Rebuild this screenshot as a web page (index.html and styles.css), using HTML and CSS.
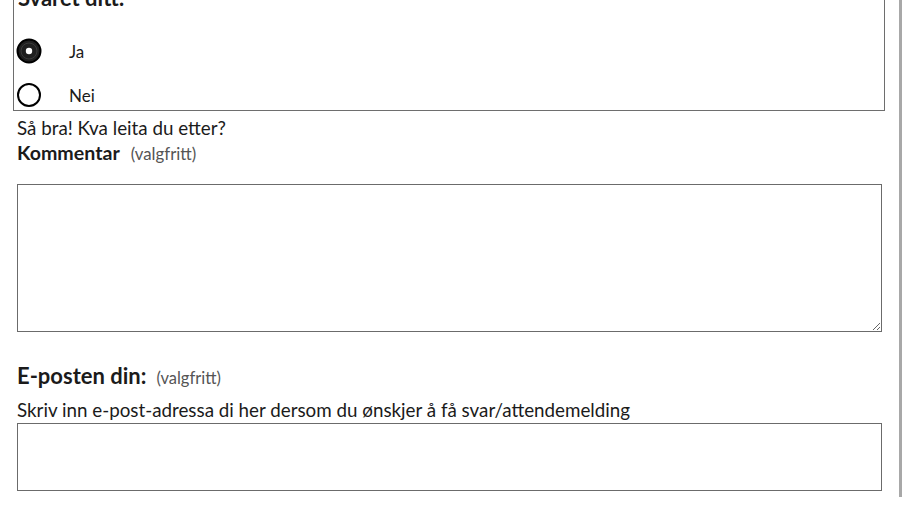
FILE: index.html
```html
<!DOCTYPE html>
<html lang="nn">
<head>
<meta charset="utf-8">
<title>Tilbakemelding</title>
<link rel="stylesheet" href="styles.css">
</head>
<body>
<div class="page">
  <div class="main">
    <div class="fieldset">
      <h2 class="legend">Svaret ditt:</h2>
      <label class="radio-row">
        <svg class="radio" width="26" height="26" viewBox="0 0 26 26"><circle cx="13" cy="13" r="11.5" fill="#1f1f1f" stroke="#000" stroke-width="2"/><circle cx="13" cy="13" r="8" fill="none" stroke="#3a3a3a" stroke-width="1"/><circle cx="13" cy="13" r="3.2" fill="#fff"/></svg>
        <span class="radio-text">Ja</span>
      </label>
      <label class="radio-row">
        <svg class="radio" width="26" height="26" viewBox="0 0 26 26"><circle cx="13" cy="13" r="11" fill="#fff" stroke="#000" stroke-width="2"/></svg>
        <span class="radio-text">Nei</span>
      </label>
    </div>
    <p class="lead">Så bra! Kva leita du etter?</p>
    <p class="label"><strong>Kommentar</strong><span class="optional">(valgfritt)</span></p>
    <textarea class="comment"></textarea>
    <h3 class="email-title">E-posten din:<span class="optional">(valgfritt)</span></h3>
    <p class="hint">Skriv inn e-post-adressa di her dersom du ønskjer å få svar/attendemelding</p>
    <div class="email-input"></div>
  </div>
  <div class="edge"></div>
</div>
</body>
</html>
```
FILE: styles.css
```css
html, body {
  margin: 0;
  padding: 0;
  background: #fff;
  overflow: hidden;
}
body {
  font-family: Lato, "Open Sans", sans-serif;
  color: #1b1b1b;
  font-size: 18.8px;
}
.page {
  display: flex;
  width: 902px;
  height: 507px;
  align-items: flex-start;
}
.main {
  width: 898px;
  margin-top: -30px;
}
.edge {
  width: 3px;
  height: 497px;
  margin-left: 1px;
  background: #a8a8a8;
}
.fieldset {
  margin-left: 13px;
  width: 868px;
  border: 1px solid #6e6e6e;
  padding: 15px 0 2px 2px;
}
.legend {
  margin: 0 0 28px 2px;
  font-size: 22px;
  line-height: 24px;
  font-weight: 700;
  color: #1b1b1b;
}
.radio-row {
  display: flex;
  align-items: center;
  height: 26px;
  margin-top: 18px;
}
.legend + .radio-row {
  margin-top: 0;
}
.radio {
  display: block;
  flex: none;
}
.radio-text {
  margin-left: 27px;
  font-size: 17px;
}
.lead {
  margin: 6px 0 0 17px;
  line-height: 22px;
}
.label {
  margin: 3px 0 0 17px;
  line-height: 22px;
}
.label strong {
  font-weight: 700;
  font-size: 19.6px;
}
.label .optional {
  margin-left: 11px;
  font-size: 16.8px;
}
.optional {
  margin-left: 10px;
  font-size: 16.5px;
  font-weight: 400;
  color: #555;
}
.comment {
  display: block;
  box-sizing: border-box;
  margin: 19px 0 0 17px;
  width: 865px;
  height: 148px;
  border: 1px solid #6b6b6b;
  padding: 4px;
  font: inherit;
}
.email-title {
  margin: 31px 0 0 17px;
  font-size: 22px;
  line-height: 26px;
  font-weight: 700;
}
.email-title .optional {
  margin-left: 10px;
}
.hint {
  margin: 8px 0 0 17px;
  line-height: 22px;
}
.email-input {
  box-sizing: border-box;
  margin: 2px 0 0 17px;
  width: 865px;
  height: 68px;
  border: 1px solid #6b6b6b;
}
```
